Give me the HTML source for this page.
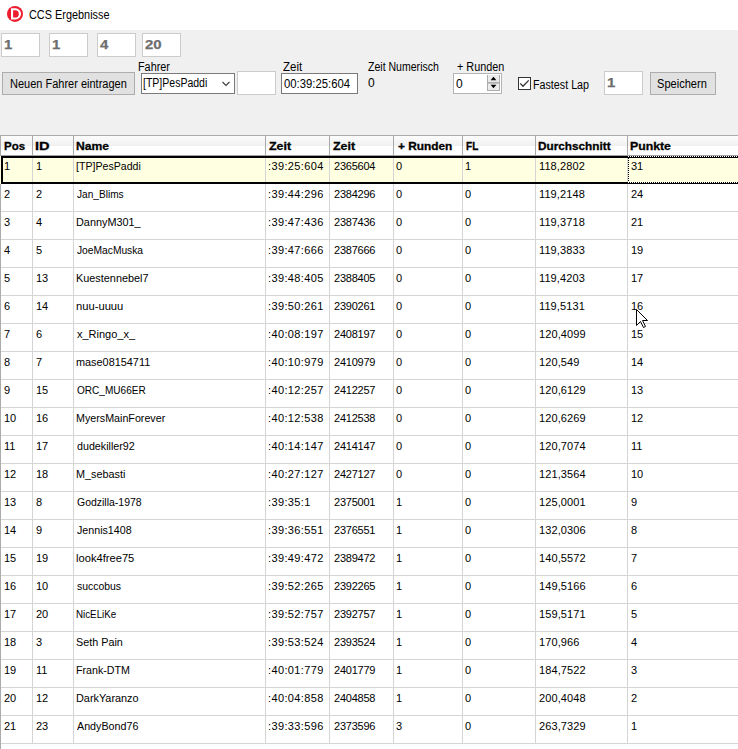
<!DOCTYPE html>
<html><head><meta charset="utf-8">
<style>
html,body{margin:0;padding:0;}
body{width:738px;height:749px;overflow:hidden;background:#f0f0f0;position:relative;font-family:"Liberation Sans",sans-serif;color:#000;}
.a{position:absolute;}
#title{position:absolute;left:0;top:0;width:738px;height:30px;background:#fff;}
.ui{position:absolute;font-size:12px;line-height:14px;white-space:nowrap;}
.tb{position:absolute;box-sizing:border-box;background:#fff;border:1px solid #7a7a7a;}
.tbd{border-color:#cccccc;}
.dis{position:absolute;font-weight:bold;font-size:13px;color:#6d6d6d;-webkit-text-stroke:0.25px #6d6d6d;line-height:14px;white-space:nowrap;transform:scaleX(1.15);transform-origin:0 0;}
.btn{position:absolute;box-sizing:border-box;background:#e1e1e1;border:1px solid #adadad;}
#grid{position:absolute;left:0;top:135px;width:760px;height:620px;background:#fff;border-top:1px solid #ababab;border-left:1px solid #ababab;box-sizing:border-box;}
#hdr{position:absolute;left:1px;top:136px;width:737px;height:20px;background:linear-gradient(#fcfcfc 0px,#f0f0f0 10px,#fff 10px,#fff 20px);}
.vh{position:absolute;top:136px;width:1px;height:19px;background:#a8a8a8;}
.vl{position:absolute;top:156px;width:1px;height:588px;background:#d5d5d5;}
.ht{position:absolute;top:140px;font-weight:bold;font-size:11.5px;line-height:13px;-webkit-text-stroke:0.3px #000;white-space:nowrap;}
.row{position:absolute;left:0;width:738px;height:28px;}
.row::after{content:"";position:absolute;left:1px;right:0;bottom:0;height:1px;background:#d5d5d5;}
.ct{position:absolute;top:4px;font-size:11px;line-height:13px;white-space:nowrap;}
.sel{background:linear-gradient(90deg,transparent 32px,#d5d5d5 32px,#d5d5d5 33px,transparent 33px,transparent 73px,#d5d5d5 73px,#d5d5d5 74px,transparent 74px,transparent 265px,#d5d5d5 265px,#d5d5d5 266px,transparent 266px,transparent 329px,#d5d5d5 329px,#d5d5d5 330px,transparent 330px,transparent 393px,#d5d5d5 393px,#d5d5d5 394px,transparent 394px,transparent 462px,#d5d5d5 462px,#d5d5d5 463px,transparent 463px,transparent 535px,#d5d5d5 535px,#d5d5d5 536px,transparent 536px,transparent 627px,#d5d5d5 627px,#d5d5d5 628px,transparent 628px),#ffffe1;z-index:2;}
.sel::after{display:none;}
#selb{position:absolute;left:1px;top:156px;width:760px;height:28px;box-sizing:border-box;border:2px solid #000;border-right:none;z-index:3;}
#focT,#focB{position:absolute;left:628px;width:110px;height:1px;background:repeating-linear-gradient(90deg,#fff 0 1px,#000 1px 2px);z-index:4;}
#focT{top:156px;} #focB{top:182px;}
#focL{position:absolute;left:628px;top:158px;width:1px;height:24px;background:repeating-linear-gradient(180deg,#000 0 1px,transparent 1px 2px);z-index:4;}
#cursor{position:absolute;left:630px;top:303px;z-index:10;}
</style></head><body>
<div id="title">
<svg class="a" style="left:0;top:0" width="30" height="30" viewBox="0 0 30 30">
<circle cx="15" cy="13.9" r="8" fill="#ed1c2e"/>
<path fill="#fff" fill-rule="evenodd" d="M11 8.3H15.5A5.55 5.55 0 0 1 15.5 19.4H11Z M13.1 10.3V17.5H15.2A3.6 3.6 0 0 0 15.2 10.3Z"/>
</svg>
</div>

<div class="tb tbd" style="left:1px;top:33px;width:39px;height:24px"></div>
<div class="tb tbd" style="left:49px;top:33px;width:39px;height:24px"></div>
<div class="tb tbd" style="left:97px;top:33px;width:39px;height:24px"></div>
<div class="tb tbd" style="left:142px;top:33px;width:39px;height:24px"></div>

<div class="btn" style="left:2px;top:72px;width:133px;height:23px"></div>

<div class="tb" style="left:141px;top:73px;width:94px;height:21px"></div>
<svg class="a" style="left:214px;top:72px" width="24" height="24"><path d="M8.5 10L12 13.5L15.5 10" stroke="#3c3c3c" fill="none" stroke-width="1.1"/></svg>

<div class="tb tbd" style="left:237px;top:71px;width:39px;height:24px"></div>

<div class="tb" style="left:281px;top:73px;width:77px;height:21px"></div>

<div class="tb" style="left:453px;top:73px;width:49px;height:21px;border-color:#b4b4b4"></div>
<div class="a" style="left:487px;top:75px;width:13px;height:16px;box-sizing:border-box;border:1px solid #acacac;border-top:none;background:#ececec"></div>
<div class="a" style="left:488px;top:82px;width:11px;height:1px;background:#acacac"></div>
<div class="a" style="left:488px;top:83px;width:11px;height:1px;background:#c4c4c4"></div>
<svg class="a" style="left:487px;top:75px" width="13" height="16"><path d="M3.6 5.2L6.5 1.8L9.4 5.2Z" fill="#000"/><path d="M3.6 9.8L6.5 13.2L9.4 9.8Z" fill="#000"/></svg>

<div class="tb" style="left:518px;top:77px;width:13px;height:13px;border-color:#333"></div>
<svg class="a" style="left:518px;top:77px" width="13" height="13"><path d="M2.2 6.4L5 9.3L10.7 3.4" stroke="#333" fill="none" stroke-width="1.35"/></svg>

<div class="tb tbd" style="left:604px;top:71px;width:39px;height:24px"></div>

<div class="btn" style="left:650px;top:72px;width:66px;height:23px"></div>
<div id="t_title" class="ui" style="left:29px;top:8px;letter-spacing:0.000px;transform:scaleX(0.9075);transform-origin:0 0">CCS Ergebnisse</div>
<div id="t_d1" class="dis" style="left:4px;top:38px;letter-spacing:0.000px">1</div>
<div id="t_d2" class="dis" style="left:52px;top:38px;letter-spacing:0.000px">1</div>
<div id="t_d3" class="dis" style="left:100px;top:38px;letter-spacing:0.000px">4</div>
<div id="t_d4" class="dis" style="left:145px;top:38px;letter-spacing:0.000px">20</div>
<div id="t_fahrer" class="ui" style="left:138px;top:60px;letter-spacing:0.000px;transform:scaleX(0.9034);transform-origin:0 0">Fahrer</div>
<div id="t_zeit" class="ui" style="left:283px;top:60px;letter-spacing:0.000px;transform:scaleX(0.9579);transform-origin:0 0">Zeit</div>
<div id="t_zeitnum" class="ui" style="left:368px;top:60px;letter-spacing:0.000px;transform:scaleX(0.8784);transform-origin:0 0">Zeit Numerisch</div>
<div id="t_runden" class="ui" style="left:457px;top:60px;letter-spacing:0.000px;transform:scaleX(0.9044);transform-origin:0 0">+ Runden</div>
<div id="t_neuen" class="ui" style="left:10px;top:77px;letter-spacing:0.000px;transform:scaleX(0.9168);transform-origin:0 0">Neuen Fahrer eintragen</div>
<div id="t_combo" class="ui" style="left:143px;top:76px;letter-spacing:0.000px;transform:scaleX(0.8759);transform-origin:0 0">[TP]PesPaddi</div>
<div id="t_zeitval" class="ui" style="left:284px;top:77px;letter-spacing:0.000px;transform:scaleX(0.9420);transform-origin:0 0">00:39:25:604</div>
<div id="t_zn0" class="ui" style="left:368px;top:76px;letter-spacing:0.000px;transform:scaleX(1.0000);transform-origin:0 0">0</div>
<div id="t_nud0" class="ui" style="left:456px;top:77px;letter-spacing:0.000px;transform:scaleX(1.0000);transform-origin:0 0">0</div>
<div id="t_fastest" class="ui" style="left:533px;top:78px;letter-spacing:0.000px;transform:scaleX(0.8934);transform-origin:0 0">Fastest Lap</div>
<div id="t_d5" class="dis" style="left:607px;top:76px;letter-spacing:0.000px">1</div>
<div id="t_speichern" class="ui" style="left:657px;top:77px;letter-spacing:0.000px;transform:scaleX(0.9217);transform-origin:0 0">Speichern</div>

<div id="grid"></div>
<div id="hdr"></div>
<div class="a" style="left:1px;top:155px;width:737px;height:1px;background:#a0a0a0"></div>
<div class="vh" style="left:32px"></div><div class="vl" style="left:32px"></div>
<div class="vh" style="left:73px"></div><div class="vl" style="left:73px"></div>
<div class="vh" style="left:265px"></div><div class="vl" style="left:265px"></div>
<div class="vh" style="left:329px"></div><div class="vl" style="left:329px"></div>
<div class="vh" style="left:393px"></div><div class="vl" style="left:393px"></div>
<div class="vh" style="left:462px"></div><div class="vl" style="left:462px"></div>
<div class="vh" style="left:535px"></div><div class="vl" style="left:535px"></div>
<div class="vh" style="left:627px"></div><div class="vl" style="left:627px"></div>
<div id="h0" class="ht" style="left:4px;transform:scaleX(1.0000);transform-origin:0 0">Pos</div>
<div id="h1" class="ht" style="left:35px;transform:scaleX(1.2667);transform-origin:0 0">ID</div>
<div id="h2" class="ht" style="left:76px;transform:scaleX(1.0552);transform-origin:0 0">Name</div>
<div id="h3" class="ht" style="left:269px;transform:scaleX(1.0842);transform-origin:0 0">Zeit</div>
<div id="h4" class="ht" style="left:333px;transform:scaleX(1.0842);transform-origin:0 0">Zeit</div>
<div id="h5" class="ht" style="left:398px;transform:scaleX(1.0314);transform-origin:0 0">+ Runden</div>
<div id="h6" class="ht" style="left:466px;transform:scaleX(0.8769);transform-origin:0 0">FL</div>
<div id="h7" class="ht" style="left:538px;transform:scaleX(1.0232);transform-origin:0 0">Durchschnitt</div>
<div id="h8" class="ht" style="left:630px;transform:scaleX(1.0667);transform-origin:0 0">Punkte</div>
<div class="row sel" style="top:156px">
<span id="c0_0" class="ct" style="left:4px;letter-spacing:0.000px">1</span>
<span id="c0_1" class="ct" style="left:36px;letter-spacing:0.000px">1</span>
<span id="c0_2" class="ct" style="left:76px;letter-spacing:0.000px;transform:scaleX(0.9631);transform-origin:0 0">[TP]PesPaddi</span>
<span id="c0_3" class="ct" style="left:268px;letter-spacing:0.362px">:39:25:604</span>
<span id="c0_4" class="ct" style="left:334px;letter-spacing:-0.233px">2365604</span>
<span id="c0_5" class="ct" style="left:396px;letter-spacing:0.000px">0</span>
<span id="c0_6" class="ct" style="left:465px;letter-spacing:0.000px">1</span>
<span id="c0_7" class="ct" style="left:539px;letter-spacing:0.100px">118,2802</span>
<span id="c0_8" class="ct" style="left:631px;letter-spacing:0.000px">31</span>
</div>
<div class="row" style="top:184px">
<span id="c1_0" class="ct" style="left:4px;letter-spacing:0.000px">2</span>
<span id="c1_1" class="ct" style="left:36px;letter-spacing:0.000px">2</span>
<span id="c1_2" class="ct" style="left:77px;letter-spacing:0.000px;transform:scaleX(0.9200);transform-origin:0 0">Jan_Blims</span>
<span id="c1_3" class="ct" style="left:268px;letter-spacing:0.362px">:39:44:296</span>
<span id="c1_4" class="ct" style="left:334px;letter-spacing:-0.233px">2384296</span>
<span id="c1_5" class="ct" style="left:396px;letter-spacing:0.000px">0</span>
<span id="c1_6" class="ct" style="left:465px;letter-spacing:0.000px">0</span>
<span id="c1_7" class="ct" style="left:539px;letter-spacing:0.100px">119,2148</span>
<span id="c1_8" class="ct" style="left:631px;letter-spacing:0.000px">24</span>
</div>
<div class="row" style="top:212px">
<span id="c2_0" class="ct" style="left:4px;letter-spacing:0.000px">3</span>
<span id="c2_1" class="ct" style="left:36px;letter-spacing:0.000px">4</span>
<span id="c2_2" class="ct" style="left:76px;letter-spacing:0.000px;transform:scaleX(0.9875);transform-origin:0 0">DannyM301_</span>
<span id="c2_3" class="ct" style="left:268px;letter-spacing:0.362px">:39:47:436</span>
<span id="c2_4" class="ct" style="left:334px;letter-spacing:-0.233px">2387436</span>
<span id="c2_5" class="ct" style="left:396px;letter-spacing:0.000px">0</span>
<span id="c2_6" class="ct" style="left:465px;letter-spacing:0.000px">0</span>
<span id="c2_7" class="ct" style="left:539px;letter-spacing:0.100px">119,3718</span>
<span id="c2_8" class="ct" style="left:631px;letter-spacing:0.000px">21</span>
</div>
<div class="row" style="top:240px">
<span id="c3_0" class="ct" style="left:4px;letter-spacing:0.000px">4</span>
<span id="c3_1" class="ct" style="left:36px;letter-spacing:0.000px">5</span>
<span id="c3_2" class="ct" style="left:77px;letter-spacing:0.000px;transform:scaleX(0.9315);transform-origin:0 0">JoeMacMuska</span>
<span id="c3_3" class="ct" style="left:268px;letter-spacing:0.362px">:39:47:666</span>
<span id="c3_4" class="ct" style="left:334px;letter-spacing:-0.233px">2387666</span>
<span id="c3_5" class="ct" style="left:396px;letter-spacing:0.000px">0</span>
<span id="c3_6" class="ct" style="left:465px;letter-spacing:0.000px">0</span>
<span id="c3_7" class="ct" style="left:539px;letter-spacing:0.100px">119,3833</span>
<span id="c3_8" class="ct" style="left:631px;letter-spacing:0.000px">19</span>
</div>
<div class="row" style="top:268px">
<span id="c4_0" class="ct" style="left:4px;letter-spacing:0.000px">5</span>
<span id="c4_1" class="ct" style="left:36px;letter-spacing:0.000px">13</span>
<span id="c4_2" class="ct" style="left:76px;letter-spacing:0.000px;transform:scaleX(0.9887);transform-origin:0 0">Kuestennebel7</span>
<span id="c4_3" class="ct" style="left:268px;letter-spacing:0.362px">:39:48:405</span>
<span id="c4_4" class="ct" style="left:334px;letter-spacing:-0.233px">2388405</span>
<span id="c4_5" class="ct" style="left:396px;letter-spacing:0.000px">0</span>
<span id="c4_6" class="ct" style="left:465px;letter-spacing:0.000px">0</span>
<span id="c4_7" class="ct" style="left:539px;letter-spacing:0.100px">119,4203</span>
<span id="c4_8" class="ct" style="left:631px;letter-spacing:0.000px">17</span>
</div>
<div class="row" style="top:296px">
<span id="c5_0" class="ct" style="left:4px;letter-spacing:0.000px">6</span>
<span id="c5_1" class="ct" style="left:36px;letter-spacing:0.000px">14</span>
<span id="c5_2" class="ct" style="left:76px;letter-spacing:0.000px;transform:scaleX(1.0182);transform-origin:0 0">nuu-uuuu</span>
<span id="c5_3" class="ct" style="left:268px;letter-spacing:0.362px">:39:50:261</span>
<span id="c5_4" class="ct" style="left:334px;letter-spacing:-0.233px">2390261</span>
<span id="c5_5" class="ct" style="left:396px;letter-spacing:0.000px">0</span>
<span id="c5_6" class="ct" style="left:465px;letter-spacing:0.000px">0</span>
<span id="c5_7" class="ct" style="left:539px;letter-spacing:0.100px">119,5131</span>
<span id="c5_8" class="ct" style="left:631px;letter-spacing:0.000px">16</span>
</div>
<div class="row" style="top:324px">
<span id="c6_0" class="ct" style="left:4px;letter-spacing:0.000px">7</span>
<span id="c6_1" class="ct" style="left:36px;letter-spacing:0.000px">6</span>
<span id="c6_2" class="ct" style="left:77px;letter-spacing:0.000px;transform:scaleX(1.0000);transform-origin:0 0">x_Ringo_x_</span>
<span id="c6_3" class="ct" style="left:268px;letter-spacing:0.362px">:40:08:197</span>
<span id="c6_4" class="ct" style="left:334px;letter-spacing:-0.233px">2408197</span>
<span id="c6_5" class="ct" style="left:396px;letter-spacing:0.000px">0</span>
<span id="c6_6" class="ct" style="left:465px;letter-spacing:0.000px">0</span>
<span id="c6_7" class="ct" style="left:539px;letter-spacing:0.100px">120,4099</span>
<span id="c6_8" class="ct" style="left:631px;letter-spacing:0.000px">15</span>
</div>
<div class="row" style="top:352px">
<span id="c7_0" class="ct" style="left:4px;letter-spacing:0.000px">8</span>
<span id="c7_1" class="ct" style="left:36px;letter-spacing:0.000px">7</span>
<span id="c7_2" class="ct" style="left:76px;letter-spacing:0.000px;transform:scaleX(0.9890);transform-origin:0 0">mase08154711</span>
<span id="c7_3" class="ct" style="left:268px;letter-spacing:0.362px">:40:10:979</span>
<span id="c7_4" class="ct" style="left:334px;letter-spacing:-0.233px">2410979</span>
<span id="c7_5" class="ct" style="left:396px;letter-spacing:0.000px">0</span>
<span id="c7_6" class="ct" style="left:465px;letter-spacing:0.000px">0</span>
<span id="c7_7" class="ct" style="left:539px;letter-spacing:0.100px">120,549</span>
<span id="c7_8" class="ct" style="left:631px;letter-spacing:0.000px">14</span>
</div>
<div class="row" style="top:380px">
<span id="c8_0" class="ct" style="left:4px;letter-spacing:0.000px">9</span>
<span id="c8_1" class="ct" style="left:36px;letter-spacing:0.000px">15</span>
<span id="c8_2" class="ct" style="left:77px;letter-spacing:0.000px;transform:scaleX(0.9134);transform-origin:0 0">ORC_MU66ER</span>
<span id="c8_3" class="ct" style="left:268px;letter-spacing:0.362px">:40:12:257</span>
<span id="c8_4" class="ct" style="left:334px;letter-spacing:-0.233px">2412257</span>
<span id="c8_5" class="ct" style="left:396px;letter-spacing:0.000px">0</span>
<span id="c8_6" class="ct" style="left:465px;letter-spacing:0.000px">0</span>
<span id="c8_7" class="ct" style="left:539px;letter-spacing:0.100px">120,6129</span>
<span id="c8_8" class="ct" style="left:631px;letter-spacing:0.000px">13</span>
</div>
<div class="row" style="top:408px">
<span id="c9_0" class="ct" style="left:4px;letter-spacing:0.000px">10</span>
<span id="c9_1" class="ct" style="left:36px;letter-spacing:0.000px">16</span>
<span id="c9_2" class="ct" style="left:76px;letter-spacing:0.000px;transform:scaleX(0.9733);transform-origin:0 0">MyersMainForever</span>
<span id="c9_3" class="ct" style="left:268px;letter-spacing:0.362px">:40:12:538</span>
<span id="c9_4" class="ct" style="left:334px;letter-spacing:-0.233px">2412538</span>
<span id="c9_5" class="ct" style="left:396px;letter-spacing:0.000px">0</span>
<span id="c9_6" class="ct" style="left:465px;letter-spacing:0.000px">0</span>
<span id="c9_7" class="ct" style="left:539px;letter-spacing:0.100px">120,6269</span>
<span id="c9_8" class="ct" style="left:631px;letter-spacing:0.000px">12</span>
</div>
<div class="row" style="top:436px">
<span id="c10_0" class="ct" style="left:4px;letter-spacing:0.000px">11</span>
<span id="c10_1" class="ct" style="left:36px;letter-spacing:0.000px">17</span>
<span id="c10_2" class="ct" style="left:77px;letter-spacing:0.000px;transform:scaleX(0.9724);transform-origin:0 0">dudekiller92</span>
<span id="c10_3" class="ct" style="left:268px;letter-spacing:0.362px">:40:14:147</span>
<span id="c10_4" class="ct" style="left:334px;letter-spacing:-0.233px">2414147</span>
<span id="c10_5" class="ct" style="left:396px;letter-spacing:0.000px">0</span>
<span id="c10_6" class="ct" style="left:465px;letter-spacing:0.000px">0</span>
<span id="c10_7" class="ct" style="left:539px;letter-spacing:0.100px">120,7074</span>
<span id="c10_8" class="ct" style="left:631px;letter-spacing:0.000px">11</span>
</div>
<div class="row" style="top:464px">
<span id="c11_0" class="ct" style="left:4px;letter-spacing:0.000px">12</span>
<span id="c11_1" class="ct" style="left:36px;letter-spacing:0.000px">18</span>
<span id="c11_2" class="ct" style="left:76px;letter-spacing:0.000px;transform:scaleX(0.9833);transform-origin:0 0">M_sebasti</span>
<span id="c11_3" class="ct" style="left:268px;letter-spacing:0.362px">:40:27:127</span>
<span id="c11_4" class="ct" style="left:334px;letter-spacing:-0.233px">2427127</span>
<span id="c11_5" class="ct" style="left:396px;letter-spacing:0.000px">0</span>
<span id="c11_6" class="ct" style="left:465px;letter-spacing:0.000px">0</span>
<span id="c11_7" class="ct" style="left:539px;letter-spacing:0.100px">121,3564</span>
<span id="c11_8" class="ct" style="left:631px;letter-spacing:0.000px">10</span>
</div>
<div class="row" style="top:492px">
<span id="c12_0" class="ct" style="left:4px;letter-spacing:0.000px">13</span>
<span id="c12_1" class="ct" style="left:36px;letter-spacing:0.000px">8</span>
<span id="c12_2" class="ct" style="left:77px;letter-spacing:0.000px;transform:scaleX(0.9522);transform-origin:0 0">Godzilla-1978</span>
<span id="c12_3" class="ct" style="left:268px;letter-spacing:0.362px">:39:35:1</span>
<span id="c12_4" class="ct" style="left:334px;letter-spacing:-0.233px">2375001</span>
<span id="c12_5" class="ct" style="left:396px;letter-spacing:0.000px">1</span>
<span id="c12_6" class="ct" style="left:465px;letter-spacing:0.000px">0</span>
<span id="c12_7" class="ct" style="left:539px;letter-spacing:0.100px">125,0001</span>
<span id="c12_8" class="ct" style="left:631px;letter-spacing:0.000px">9</span>
</div>
<div class="row" style="top:520px">
<span id="c13_0" class="ct" style="left:4px;letter-spacing:0.000px">14</span>
<span id="c13_1" class="ct" style="left:36px;letter-spacing:0.000px">9</span>
<span id="c13_2" class="ct" style="left:77px;letter-spacing:0.000px;transform:scaleX(0.9709);transform-origin:0 0">Jennis1408</span>
<span id="c13_3" class="ct" style="left:268px;letter-spacing:0.362px">:39:36:551</span>
<span id="c13_4" class="ct" style="left:334px;letter-spacing:-0.233px">2376551</span>
<span id="c13_5" class="ct" style="left:396px;letter-spacing:0.000px">1</span>
<span id="c13_6" class="ct" style="left:465px;letter-spacing:0.000px">0</span>
<span id="c13_7" class="ct" style="left:539px;letter-spacing:0.100px">132,0306</span>
<span id="c13_8" class="ct" style="left:631px;letter-spacing:0.000px">8</span>
</div>
<div class="row" style="top:548px">
<span id="c14_0" class="ct" style="left:4px;letter-spacing:0.000px">15</span>
<span id="c14_1" class="ct" style="left:36px;letter-spacing:0.000px">19</span>
<span id="c14_2" class="ct" style="left:76px;letter-spacing:0.000px;transform:scaleX(1.0145);transform-origin:0 0">look4free75</span>
<span id="c14_3" class="ct" style="left:268px;letter-spacing:0.362px">:39:49:472</span>
<span id="c14_4" class="ct" style="left:334px;letter-spacing:-0.233px">2389472</span>
<span id="c14_5" class="ct" style="left:396px;letter-spacing:0.000px">1</span>
<span id="c14_6" class="ct" style="left:465px;letter-spacing:0.000px">0</span>
<span id="c14_7" class="ct" style="left:539px;letter-spacing:0.100px">140,5572</span>
<span id="c14_8" class="ct" style="left:631px;letter-spacing:0.000px">7</span>
</div>
<div class="row" style="top:576px">
<span id="c15_0" class="ct" style="left:4px;letter-spacing:0.000px">16</span>
<span id="c15_1" class="ct" style="left:36px;letter-spacing:0.000px">10</span>
<span id="c15_2" class="ct" style="left:77px;letter-spacing:0.000px;transform:scaleX(0.9469);transform-origin:0 0">succobus</span>
<span id="c15_3" class="ct" style="left:268px;letter-spacing:0.362px">:39:52:265</span>
<span id="c15_4" class="ct" style="left:334px;letter-spacing:-0.233px">2392265</span>
<span id="c15_5" class="ct" style="left:396px;letter-spacing:0.000px">1</span>
<span id="c15_6" class="ct" style="left:465px;letter-spacing:0.000px">0</span>
<span id="c15_7" class="ct" style="left:539px;letter-spacing:0.100px">149,5166</span>
<span id="c15_8" class="ct" style="left:631px;letter-spacing:0.000px">6</span>
</div>
<div class="row" style="top:604px">
<span id="c16_0" class="ct" style="left:4px;letter-spacing:0.000px">17</span>
<span id="c16_1" class="ct" style="left:36px;letter-spacing:0.000px">20</span>
<span id="c16_2" class="ct" style="left:76px;letter-spacing:0.000px;transform:scaleX(0.8884);transform-origin:0 0">NicELiKe</span>
<span id="c16_3" class="ct" style="left:268px;letter-spacing:0.362px">:39:52:757</span>
<span id="c16_4" class="ct" style="left:334px;letter-spacing:-0.233px">2392757</span>
<span id="c16_5" class="ct" style="left:396px;letter-spacing:0.000px">1</span>
<span id="c16_6" class="ct" style="left:465px;letter-spacing:0.000px">0</span>
<span id="c16_7" class="ct" style="left:539px;letter-spacing:0.100px">159,5171</span>
<span id="c16_8" class="ct" style="left:631px;letter-spacing:0.000px">5</span>
</div>
<div class="row" style="top:632px">
<span id="c17_0" class="ct" style="left:4px;letter-spacing:0.000px">18</span>
<span id="c17_1" class="ct" style="left:36px;letter-spacing:0.000px">3</span>
<span id="c17_2" class="ct" style="left:76px;letter-spacing:0.000px;transform:scaleX(0.9822);transform-origin:0 0">Seth Pain</span>
<span id="c17_3" class="ct" style="left:268px;letter-spacing:0.362px">:39:53:524</span>
<span id="c17_4" class="ct" style="left:334px;letter-spacing:-0.233px">2393524</span>
<span id="c17_5" class="ct" style="left:396px;letter-spacing:0.000px">1</span>
<span id="c17_6" class="ct" style="left:465px;letter-spacing:0.000px">0</span>
<span id="c17_7" class="ct" style="left:539px;letter-spacing:0.100px">170,966</span>
<span id="c17_8" class="ct" style="left:631px;letter-spacing:0.000px">4</span>
</div>
<div class="row" style="top:660px">
<span id="c18_0" class="ct" style="left:4px;letter-spacing:0.000px">19</span>
<span id="c18_1" class="ct" style="left:36px;letter-spacing:0.000px">11</span>
<span id="c18_2" class="ct" style="left:76px;letter-spacing:0.000px;transform:scaleX(0.9698);transform-origin:0 0">Frank-DTM</span>
<span id="c18_3" class="ct" style="left:268px;letter-spacing:0.362px">:40:01:779</span>
<span id="c18_4" class="ct" style="left:334px;letter-spacing:-0.233px">2401779</span>
<span id="c18_5" class="ct" style="left:396px;letter-spacing:0.000px">1</span>
<span id="c18_6" class="ct" style="left:465px;letter-spacing:0.000px">0</span>
<span id="c18_7" class="ct" style="left:539px;letter-spacing:0.100px">184,7522</span>
<span id="c18_8" class="ct" style="left:631px;letter-spacing:0.000px">3</span>
</div>
<div class="row" style="top:688px">
<span id="c19_0" class="ct" style="left:4px;letter-spacing:0.000px">20</span>
<span id="c19_1" class="ct" style="left:36px;letter-spacing:0.000px">12</span>
<span id="c19_2" class="ct" style="left:76px;letter-spacing:0.000px;transform:scaleX(0.9869);transform-origin:0 0">DarkYaranzo</span>
<span id="c19_3" class="ct" style="left:268px;letter-spacing:0.362px">:40:04:858</span>
<span id="c19_4" class="ct" style="left:334px;letter-spacing:-0.233px">2404858</span>
<span id="c19_5" class="ct" style="left:396px;letter-spacing:0.000px">1</span>
<span id="c19_6" class="ct" style="left:465px;letter-spacing:0.000px">0</span>
<span id="c19_7" class="ct" style="left:539px;letter-spacing:0.100px">200,4048</span>
<span id="c19_8" class="ct" style="left:631px;letter-spacing:0.000px">2</span>
</div>
<div class="row" style="top:716px">
<span id="c20_0" class="ct" style="left:4px;letter-spacing:0.000px">21</span>
<span id="c20_1" class="ct" style="left:36px;letter-spacing:0.000px">23</span>
<span id="c20_2" class="ct" style="left:77px;letter-spacing:0.000px;transform:scaleX(0.9742);transform-origin:0 0">AndyBond76</span>
<span id="c20_3" class="ct" style="left:268px;letter-spacing:0.362px">:39:33:596</span>
<span id="c20_4" class="ct" style="left:334px;letter-spacing:-0.233px">2373596</span>
<span id="c20_5" class="ct" style="left:396px;letter-spacing:0.000px">3</span>
<span id="c20_6" class="ct" style="left:465px;letter-spacing:0.000px">0</span>
<span id="c20_7" class="ct" style="left:539px;letter-spacing:0.100px">263,7329</span>
<span id="c20_8" class="ct" style="left:631px;letter-spacing:0.000px">1</span>
</div>
<div id="selb"></div>
<div id="focT"></div><div id="focB"></div><div id="focL"></div>
<svg id="cursor" width="20" height="26" viewBox="0 0 20 26"><path d="M6.5 6.5V22.5L10.5 18.5L13.5 24.5L15.5 23.5L12.5 17.5H17.5Z" fill="#fff" stroke="#000" stroke-width="1" stroke-linejoin="miter"/></svg>
</body></html>
